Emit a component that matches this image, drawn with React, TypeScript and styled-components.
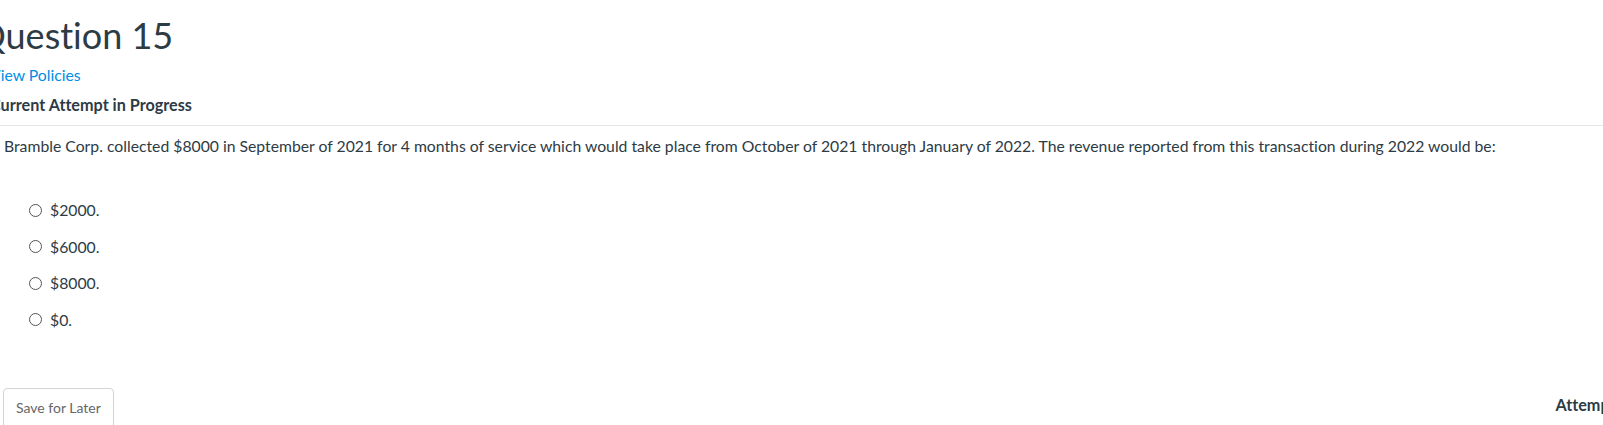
import React from 'react';
import styled, { createGlobalStyle } from 'styled-components';

const GlobalStyle = createGlobalStyle`
    html, body {
        margin: 0;
        padding: 0;
        overflow: hidden;
        background: #ffffff;
    }
    body {
        font-family: Lato, "Liberation Sans", sans-serif;
        font-variant-ligatures: no-common-ligatures;
        color: #2d3b45;
    }
`;

const Page = styled.div`
    width: 1720px;
    margin-left: -10px;
`;

const Title = styled.h1`
    margin: 0;
    padding-top: 13px;
    margin-left: -13px;
    font-size: 36px;
    font-weight: 400;
    line-height: 44px;
    color: #2d3b45;
`;

const PolicyLink = styled.a`
    display: block;
    margin-top: 7px;
    font-size: 15.75px;
    line-height: 22px;
    color: #008ee2;
    text-decoration: none;
`;

const AttemptLabel = styled.div`
    margin-top: 8px;
    font-size: 16.2px;
    font-weight: 700;
    line-height: 22px;
`;

const Divider = styled.hr`
    margin: 9px 0 0 0;
    border: 0;
    border-top: 1px solid #e6e6e6;
`;

const Prompt = styled.p`
    margin: 9px 0 0 14px;
    font-size: 15.75px;
    line-height: 22px;
`;

const Choices = styled.ul`
    list-style: none;
    margin: 42px 0 0 0;
    padding: 0 0 0 39px;
    display: flex;
    flex-direction: column;
    gap: 14.5px;
`;

const Choice = styled.li`
    display: flex;
    align-items: center;
    gap: 8px;
    font-size: 15.75px;
    line-height: 22px;
`;

const Radio = styled.span`
    width: 11px;
    height: 11px;
    border: 1px solid #555;
    border-radius: 50%;
    flex: none;
`;

const Footer = styled.div`
    display: flex;
    justify-content: space-between;
    align-items: flex-start;
    margin-top: 57px;
    padding-left: 13px;
`;

const SaveButton = styled.button`
    font-family: Lato, "Liberation Sans", sans-serif;
    font-variant-ligatures: no-common-ligatures;
    font-size: 14px;
    color: #666;
    background: #fff;
    border: 1px solid #d4d4d4;
    border-radius: 4px;
    padding: 9px 12px 14px;
    line-height: 20px;
`;

const Attempts = styled.div`
    font-size: 16.2px;
    font-weight: 700;
    line-height: 22px;
    margin-top: 6px;
`;

const options = ['$2000.', '$6000.', '$8000.', '$0.'];

export default function App() {
    return (
        <Page>
            <GlobalStyle />
            <Title>Question 15</Title>
            <PolicyLink href="#">View Policies</PolicyLink>
            <AttemptLabel>Current Attempt in Progress</AttemptLabel>
            <Divider />
            <Prompt>
                Bramble Corp. collected $8000 in September of 2021 for 4 months of service which would take place from October of 2021 through January of 2022. The revenue reported from this transaction during 2022 would be:
            </Prompt>
            <Choices>
                {options.map((o) => (
                    <Choice key={o}>
                        <Radio />
                        {o}
                    </Choice>
                ))}
            </Choices>
            <Footer>
                <SaveButton>Save for Later</SaveButton>
                <Attempts>Attempts: 0 of 1 used</Attempts>
            </Footer>
        </Page>
    );
}
